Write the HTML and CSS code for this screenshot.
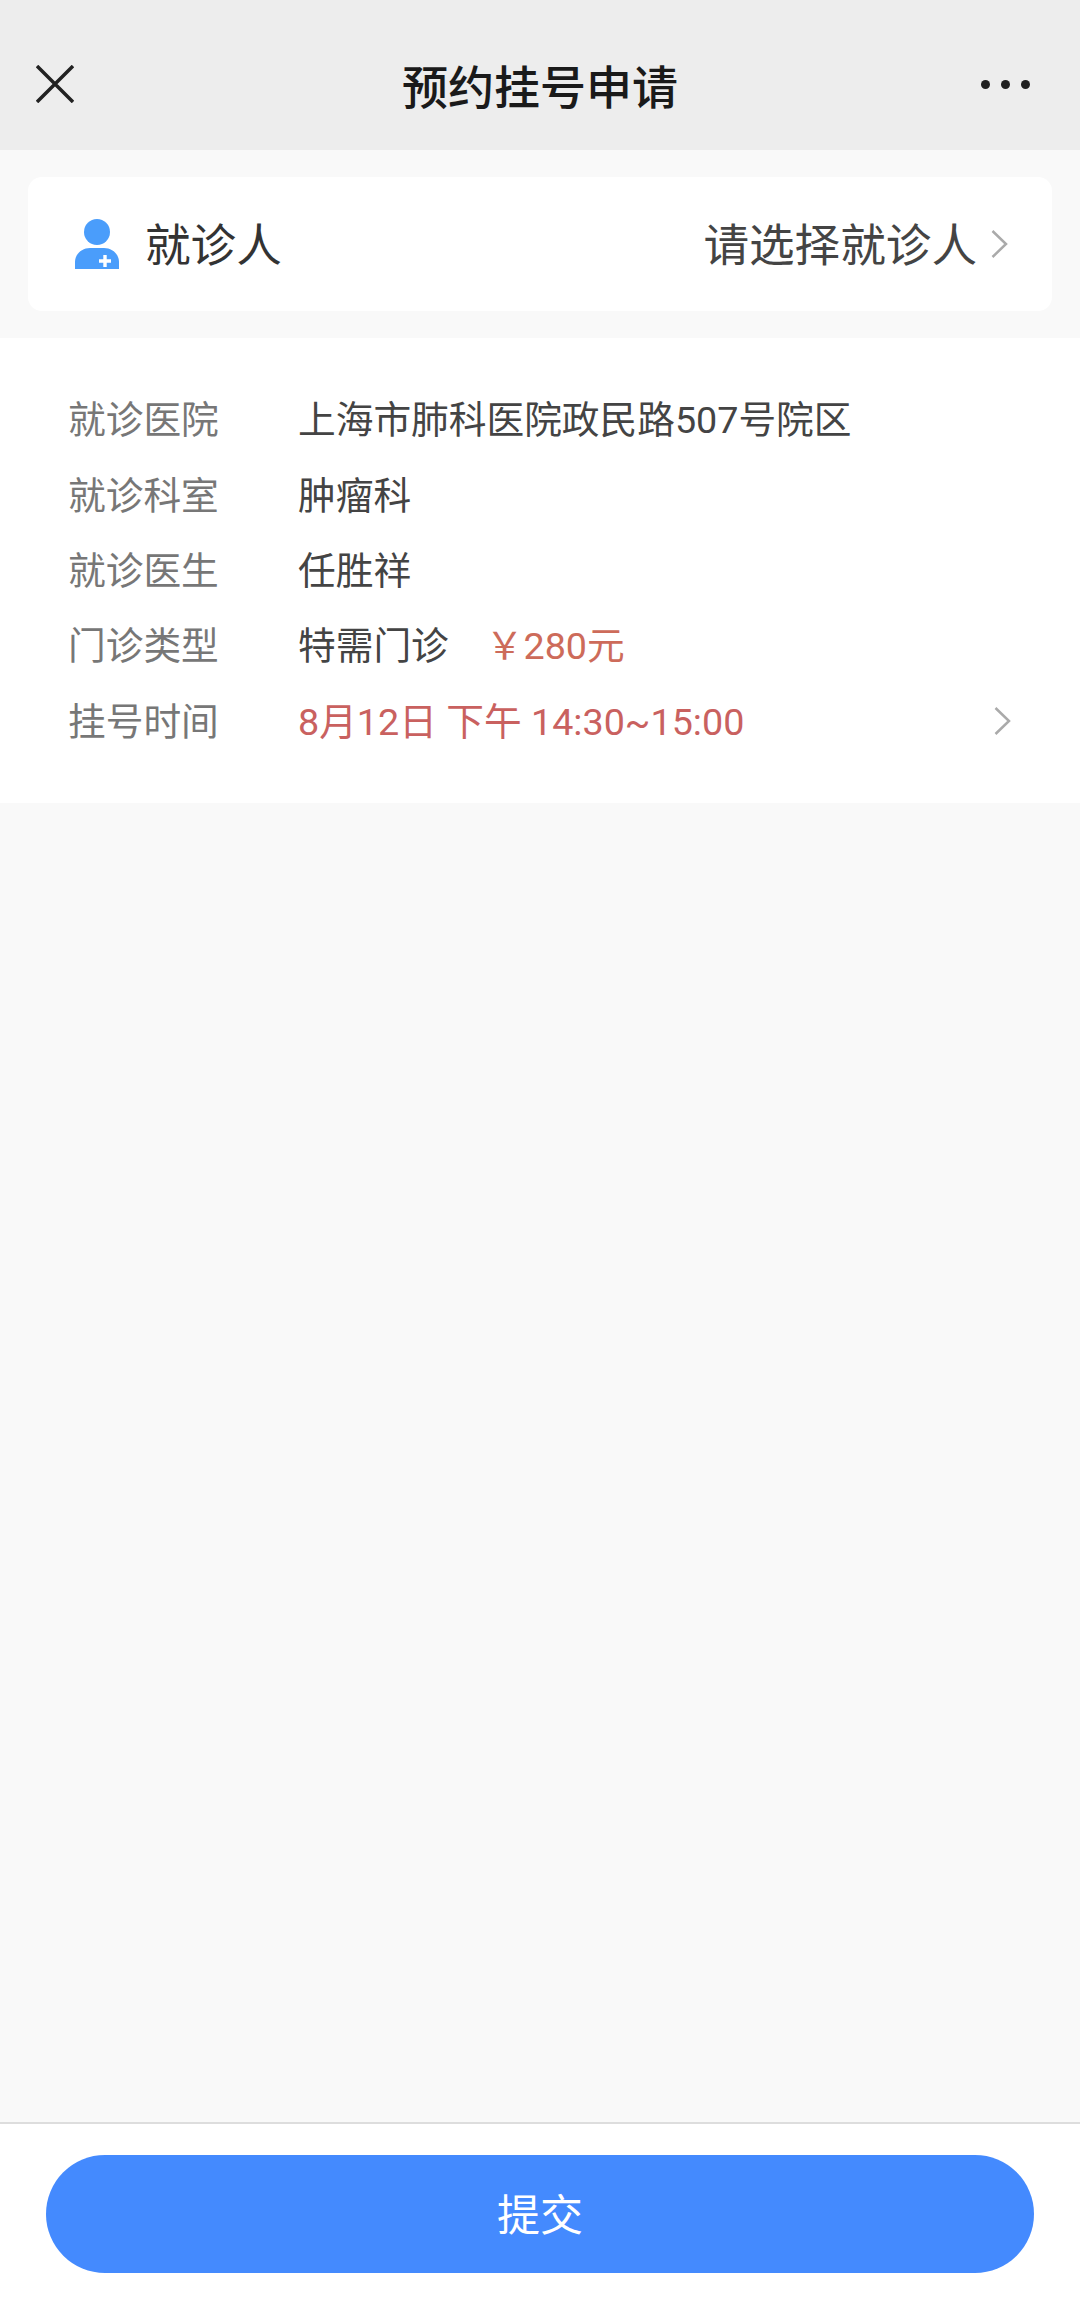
FILE: index.html
```html
<!DOCTYPE html>
<html lang="zh-CN">
<head>
    <meta charset="UTF-8">
    <meta name="viewport" content="width=device-width, initial-scale=1.0">
    <title>预约挂号申请</title>
    <link rel="stylesheet" href="styles.css">
</head>
<body>

<div class="page">
    <header class="topbar">
        <svg class="icon-close" viewBox="0 0 38 38">
            <path d="M1 1 L37 37 M37 1 L1 37" />
        </svg>
        <h1>预约挂号申请</h1>
        <div class="icon-more"><span></span><span></span><span></span></div>
    </header>

    <div class="patient-wrap">
        <div class="patient-card">
            <svg class="icon-patient" viewBox="0 0 46 50">
                <circle cx="23" cy="13" r="13" fill="#4a9dfb" />
                <path d="M1 50 V43 C1 35 8 29 16 29 H30 C38 29 45 35 45 43 V50 Z" fill="#4a9dfb" />
                <path d="M25 42 H37 M31 36 V48" stroke="#fff" stroke-width="3.4" fill="none" />
            </svg>
            <span class="patient-label">就诊人</span>
            <span class="patient-pick">请选择就诊人</span>
            <svg class="chevron" viewBox="0 0 17 28">
                <path d="M1.5 1 L15 14 L1.5 27" />
            </svg>
        </div>
    </div>

    <section class="info">
        <div class="row"><span class="label">就诊医院</span><span class="value">上海市肺科医院政民路507号院区</span></div>
        <div class="row"><span class="label">就诊科室</span><span class="value">肿瘤科</span></div>
        <div class="row"><span class="label">就诊医生</span><span class="value">任胜祥</span></div>
        <div class="row"><span class="label">门诊类型</span><span class="value">特需门诊</span><span class="price">￥280元</span></div>
        <div class="row">
            <span class="label">挂号时间</span><span class="value time">8月12日 下午 14:30~15:00</span>
            <svg class="chevron chevron-time" viewBox="0 0 17 28">
                <path d="M1.5 1 L15 14 L1.5 27" />
            </svg>
        </div>
    </section>

    <div class="spacer"></div>

    <footer class="bottom">
        <button class="submit">提交</button>
    </footer>
</div>

</body>
</html>
```

FILE: styles.css
```css
* {
    box-sizing: border-box;
}
body {
    margin: 0;
    padding: 0;
    font-family: Roboto, "Noto Sans CJK SC", sans-serif;
    background-color: #f9f9f9;
}
.page {
    width: 1080px;
    height: 2309px;
    display: flex;
    flex-direction: column;
}
.topbar {
    height: 150px;
    flex: none;
    background-color: #ededed;
    display: grid;
    grid-template-columns: 1fr auto 1fr;
    align-items: center;
    padding: 18px 50px 0 36px;
}
.topbar h1 {
    margin: 0 0 0 14px;
    font-size: 46px;
    font-weight: 500;
    color: #1a1a1a;
}
.icon-close {
    width: 38px;
    height: 38px;
}
.icon-close path {
    stroke: #222;
    stroke-width: 3.5;
    fill: none;
}
.icon-more {
    display: flex;
    gap: 11px;
    justify-content: flex-end;
}
.icon-more span {
    width: 9px;
    height: 9px;
    border-radius: 50%;
    background-color: #222;
}
.patient-wrap {
    flex: none;
    padding: 27px 28px;
}
.patient-card {
    height: 134px;
    background-color: #fff;
    border-radius: 14px;
    display: flex;
    align-items: center;
    padding: 0 44px 0 46px;
}
.icon-patient {
    width: 46px;
    height: 50px;
    margin-right: 25px;
}
.patient-label {
    font-size: 45.6px;
    color: #333;
    margin-bottom: 5px;
}
.patient-pick {
    margin-left: auto;
    font-size: 45.6px;
    color: #444;
    margin-bottom: 5px;
}
.chevron {
    width: 17px;
    height: 28px;
    margin-left: 14px;
}
.chevron path {
    stroke: #aaa;
    stroke-width: 2.5;
    fill: none;
}
.info {
    flex: none;
    height: 465px;
    background-color: #fff;
    padding: 41px 69px 0 68px;
}
.row {
    height: 75.4px;
    display: flex;
    align-items: center;
    font-size: 37.7px;
}
.label {
    width: 230px;
    color: #777;
}
.value {
    color: #444;
}
.price {
    margin-left: 37px;
    color: #cd6b5a;
}
.time {
    color: #c9615f;
}
.chevron-time {
    margin-left: auto;
    margin-top: 5px;
}
.spacer {
    flex: 1;
}
.bottom {
    flex: none;
    height: 187px;
    background-color: #fff;
    border-top: 2px solid #ddd;
    padding: 31px 46px 0 46px;
}
.submit {
    display: block;
    width: 100%;
    height: 118px;
    border: none;
    border-radius: 59px;
    background-color: #448afe;
    color: #fff;
    font-family: inherit;
    font-size: 43px;
    padding: 0 0 5px;
}
```
